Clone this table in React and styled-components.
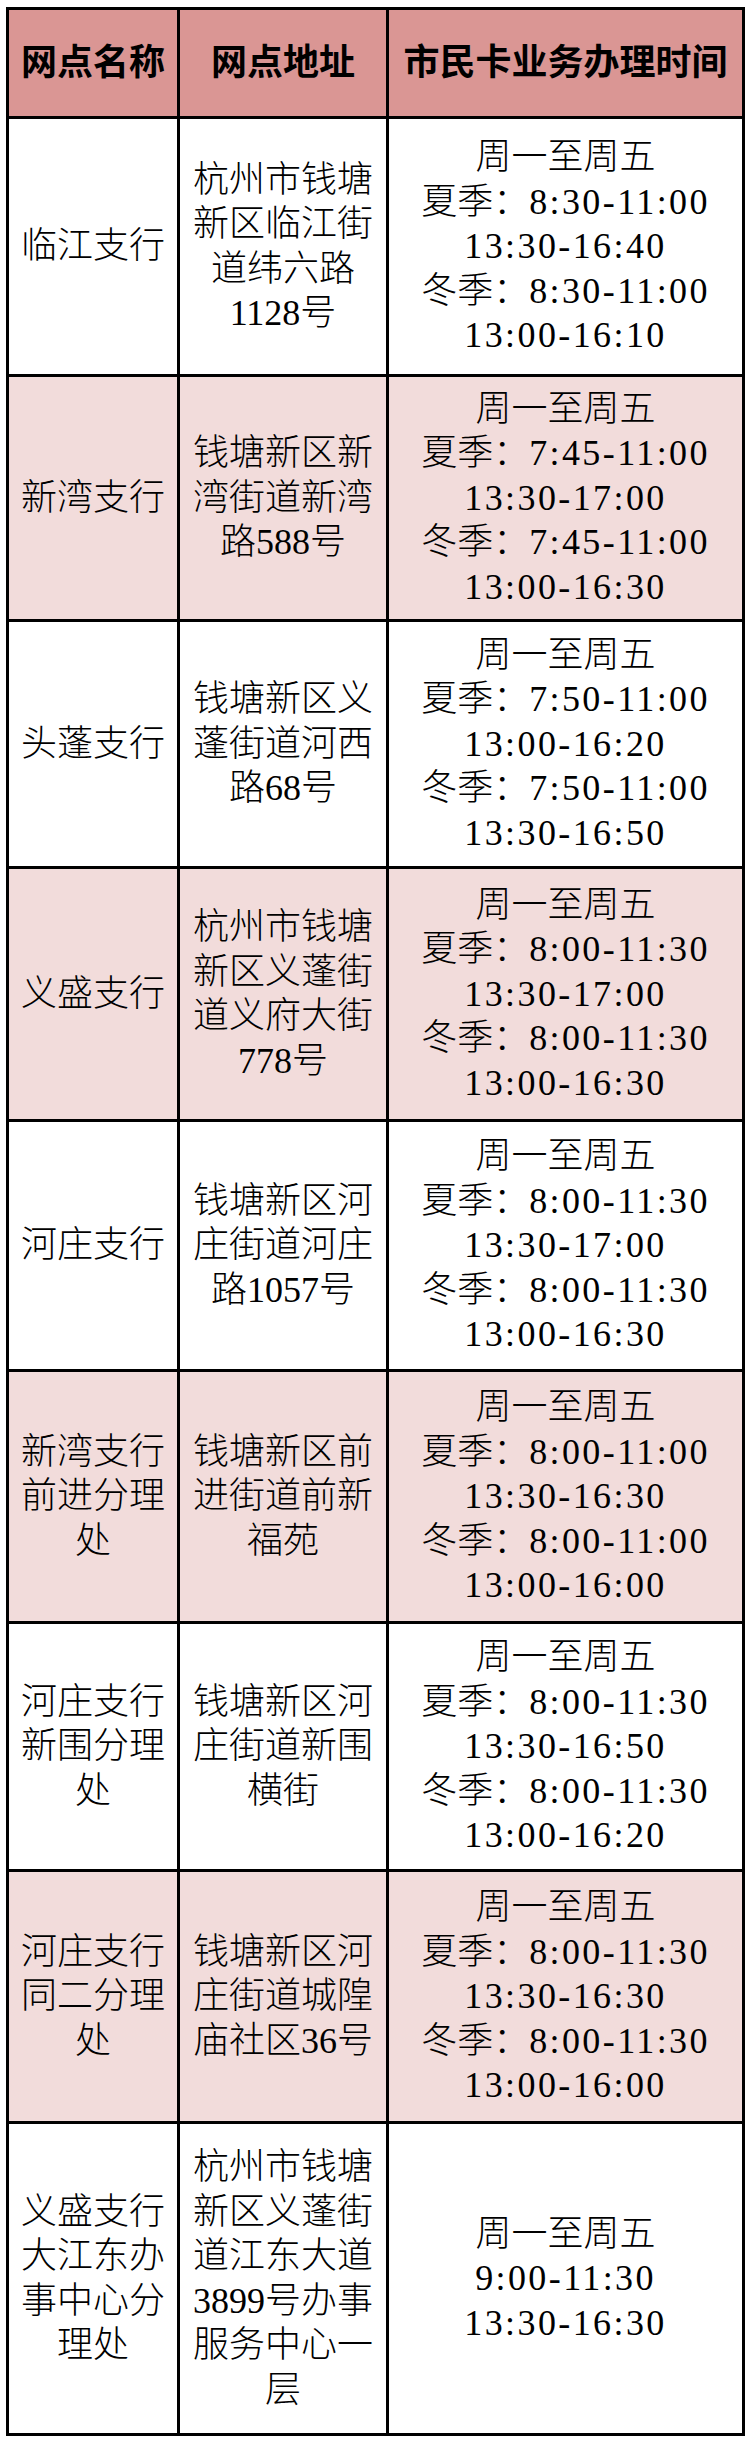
import React from 'react';
import styled, { createGlobalStyle } from 'styled-components';

const GlobalStyle = createGlobalStyle`
  html, body {
    margin: 0;
    padding: 0;
    background: #fff;
  }
  * {
    box-sizing: border-box;
  }
`;

const Page = styled.div`
  width: 750px;
  min-height: 2451px;
  padding: 7px 0 0 6px;
  background: #fff;
  font-family: "Liberation Serif", "Noto Sans CJK SC", serif;
  color: #000;
`;

const Table = styled.div`
  width: 739px;
  border: 3px solid #000;
  display: flex;
  flex-direction: column;
`;

const Row = styled.div`
  display: grid;
  grid-template-columns: 168px 209px 356px;
  height: ${p => p.h}px;
  background: ${p => (p.head ? '#DA9694' : p.shade ? '#F2DCDB' : '#fff')};
  border-top: ${p => (p.head ? 'none' : '3px solid #000')};
`;

const Cell = styled.div`
  display: flex;
  flex-direction: column;
  align-items: center;
  justify-content: center;
  text-align: center;
  border-left: ${p => (p.first ? 'none' : '3px solid #000')};
  font-size: 36px;
  line-height: 44.5px;
  font-weight: ${p => (p.head ? 700 : 300)};
  white-space: nowrap;
`;

const Line = styled.span`
  display: block;
`;

const Time = styled.span`
  letter-spacing: 2.4px;
`;

const rows = [
  {
    h: 258,
    name: ['临江支行'],
    addr: ['杭州市钱塘', '新区临江街', '道纬六路', '1128号'],
    times: ['8:30-11:00', '13:30-16:40', '8:30-11:00', '13:00-16:10'],
  },
  {
    h: 245,
    name: ['新湾支行'],
    addr: ['钱塘新区新', '湾街道新湾', '路588号'],
    times: ['7:45-11:00', '13:30-17:00', '7:45-11:00', '13:00-16:30'],
  },
  {
    h: 247,
    name: ['头蓬支行'],
    addr: ['钱塘新区义', '蓬街道河西', '路68号'],
    times: ['7:50-11:00', '13:00-16:20', '7:50-11:00', '13:30-16:50'],
  },
  {
    h: 253,
    name: ['义盛支行'],
    addr: ['杭州市钱塘', '新区义蓬街', '道义府大街', '778号'],
    times: ['8:00-11:30', '13:30-17:00', '8:00-11:30', '13:00-16:30'],
  },
  {
    h: 250,
    name: ['河庄支行'],
    addr: ['钱塘新区河', '庄街道河庄', '路1057号'],
    times: ['8:00-11:30', '13:30-17:00', '8:00-11:30', '13:00-16:30'],
  },
  {
    h: 252,
    name: ['新湾支行', '前进分理', '处'],
    addr: ['钱塘新区前', '进街道前新', '福苑'],
    times: ['8:00-11:00', '13:30-16:30', '8:00-11:00', '13:00-16:00'],
  },
  {
    h: 248,
    name: ['河庄支行', '新围分理', '处'],
    addr: ['钱塘新区河', '庄街道新围', '横街'],
    times: ['8:00-11:30', '13:30-16:50', '8:00-11:30', '13:00-16:20'],
  },
  {
    h: 252,
    name: ['河庄支行', '同二分理', '处'],
    addr: ['钱塘新区河', '庄街道城隍', '庙社区36号'],
    times: ['8:00-11:30', '13:30-16:30', '8:00-11:30', '13:00-16:00'],
  },
  {
    h: 312,
    name: ['义盛支行', '大江东办', '事中心分', '理处'],
    addr: ['杭州市钱塘', '新区义蓬街', '道江东大道', '3899号办事', '服务中心一', '层'],
    allYear: ['9:00-11:30', '13:30-16:30'],
  },
];

const Lines = ({ items }) => items.map((t, i) => <Line key={i}>{t}</Line>);

const Hours = ({ row }) => {
  if (row.allYear) {
    return (
      <>
        <Line>周一至周五</Line>
        {row.allYear.map((t, i) => (
          <Line key={i}><Time>{t}</Time></Line>
        ))}
      </>
    );
  }
  const [s1, s2, w1, w2] = row.times;
  return (
    <>
      <Line>周一至周五</Line>
      <Line>夏季：<Time>{s1}</Time></Line>
      <Line><Time>{s2}</Time></Line>
      <Line>冬季：<Time>{w1}</Time></Line>
      <Line><Time>{w2}</Time></Line>
    </>
  );
};

export default function App() {
  return (
    <Page>
      <GlobalStyle />
      <Table>
        <Row head h={106}>
          <Cell head first>网点名称</Cell>
          <Cell head>网点地址</Cell>
          <Cell head>市民卡业务办理时间</Cell>
        </Row>
        {rows.map((row, i) => (
          <Row key={i} h={row.h} shade={i % 2 === 1}>
            <Cell first><Lines items={row.name} /></Cell>
            <Cell><Lines items={row.addr} /></Cell>
            <Cell><Hours row={row} /></Cell>
          </Row>
        ))}
      </Table>
    </Page>
  );
}
